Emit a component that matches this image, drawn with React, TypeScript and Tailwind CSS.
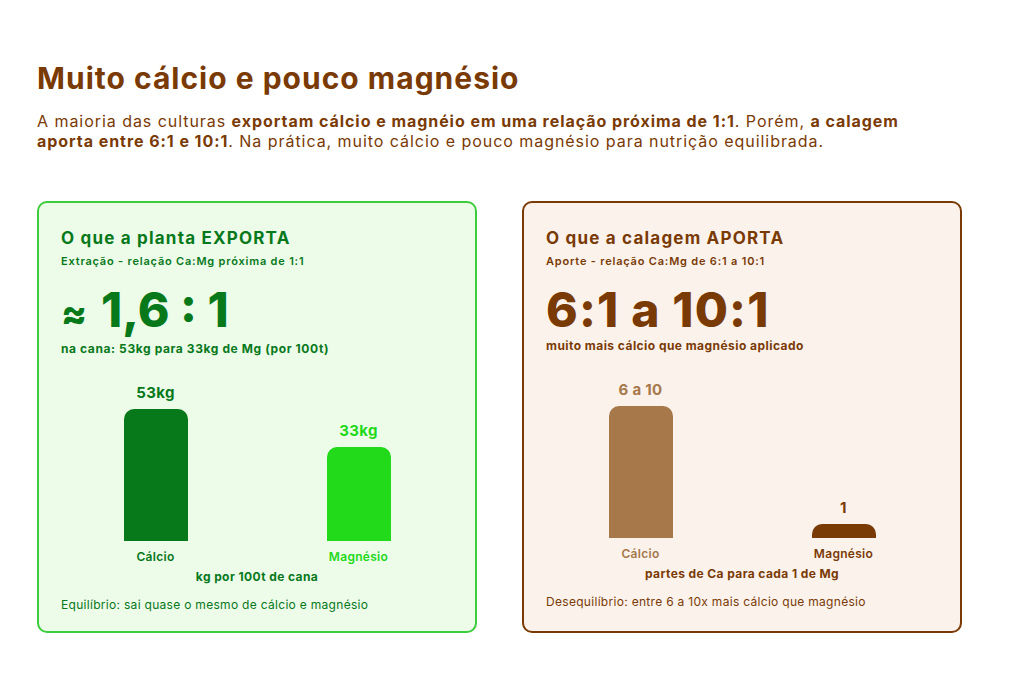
const Bar = ({
  value,
  label,
  height,
  barColor,
  valueColor,
  labelColor,
}: {
  value: string;
  label: string;
  height: number;
  barColor: string;
  valueColor: string;
  labelColor: string;
}) => (
  <div className="flex w-[64px] flex-col items-center">
    <p className={`whitespace-nowrap text-[15px] font-bold leading-[20px] tracking-[0.3px] ${valueColor}`}>{value}</p>
    <div className={`mt-[6px] w-[64px] rounded-t-[10px] ${barColor}`} style={{ height }} />
    <p className={`mt-[8px] whitespace-nowrap text-[12px] font-semibold leading-[16px] tracking-[0.3px] ${labelColor}`}>
      {label}
    </p>
  </div>
);

const App = () => {
  return (
    <div className="min-h-[700px] bg-white px-[37px] pt-[60px] font-['Inter',sans-serif]">
      <h1 className="text-[30px] font-bold leading-[36px] tracking-[1px] text-[#7a3a05]">
        Muito cálcio e pouco magnésio
      </h1>
      <p className="mt-[15px] w-[925px] text-[16px] leading-[20px] tracking-[0.95px] text-[#7a3a05]">
        A maioria das culturas <b>exportam cálcio e magnéio em uma relação próxima de 1:1</b>. Porém,{" "}
        <b>a calagem</b>
        <br />
        <b>aporta entre 6:1 e 10:1</b>. Na prática, muito cálcio e pouco magnésio para nutrição equilibrada.
      </p>

      <div className="mt-[50px] grid w-[925px] grid-cols-2 gap-[45px]">
        {/* exporta */}
        <div className="rounded-[10px] border-2 border-[#3ccc3c] bg-[#edfbe9] px-[22px] pb-[18px] pt-[24px]">
          <h2 className="text-[17px] font-bold leading-[22px] tracking-[1.2px] text-[#07791b]">O que a planta EXPORTA</h2>
          <p className="mt-[4px] text-[11px] font-semibold leading-[16px] tracking-[0.8px] text-[#07791b]">
            Extração - relação Ca:Mg próxima de 1:1
          </p>
          <p className="mt-[13px] flex items-baseline text-[48px] font-extrabold leading-[56px] text-[#07791b]">
            <span className="mr-[14px] text-[38px]">≈</span>1,6 : 1
          </p>
          <p className="text-[12px] font-bold leading-[16px] tracking-[0.6px] text-[#07791b]">
            na cana: 53kg para 33kg de Mg (por 100t)
          </p>
          <div className="mt-[26px] flex items-end justify-center gap-[139px]">
            <Bar value="53kg" label="Cálcio" height={132} barColor="bg-[#07791b]" valueColor="text-[#07791b]" labelColor="text-[#07791b]" />
            <Bar value="33kg" label="Magnésio" height={94} barColor="bg-[#22d91a]" valueColor="text-[#22d91a]" labelColor="text-[#22d91a]" />
          </div>
          <p className="mt-[4px] text-center text-[12px] font-bold leading-[16px] tracking-[0.4px] text-[#07791b]">
            kg por 100t de cana
          </p>
          <p className="mt-[12px] text-[12px] leading-[16px] tracking-[0.3px] text-[#07791b]">
            Equilíbrio: sai quase o mesmo de cálcio e magnésio
          </p>
        </div>

        {/* aporta */}
        <div className="rounded-[10px] border-2 border-[#7a3a05] bg-[#fbf2ec] px-[22px] pb-[18px] pt-[24px]">
          <h2 className="text-[17px] font-bold leading-[22px] tracking-[1.2px] text-[#7a3a05]">O que a calagem APORTA</h2>
          <p className="mt-[4px] text-[11px] font-semibold leading-[16px] tracking-[0.8px] text-[#7a3a05]">
            Aporte - relação Ca:Mg de 6:1 a 10:1
          </p>
          <p className="mt-[13px] text-[48px] font-extrabold leading-[56px] tracking-[1.2px] text-[#7a3a05]">
            6:1 a 10:1
          </p>
          <p className="text-[12px] font-bold leading-[16px] tracking-[0.45px] text-[#7a3a05]">
            muito mais cálcio que magnésio aplicado
          </p>
          <div className="mt-[26px] flex items-end justify-center gap-[139px]">
            <Bar value="6 a 10" label="Cálcio" height={132} barColor="bg-[#a6784a]" valueColor="text-[#a6784a]" labelColor="text-[#a6784a]" />
            <Bar value="1" label="Magnésio" height={14} barColor="bg-[#7a3a05]" valueColor="text-[#7a3a05]" labelColor="text-[#7a3a05]" />
          </div>
          <p className="mt-[4px] text-center text-[12px] font-bold leading-[16px] tracking-[0.4px] text-[#7a3a05]">
            partes de Ca para cada 1 de Mg
          </p>
          <p className="mt-[12px] text-[12px] leading-[16px] tracking-[0.3px] text-[#7a3a05]">
            Desequilíbrio: entre 6 a 10x mais cálcio que magnésio
          </p>
        </div>
      </div>
    </div>
  );
};

export default App;
